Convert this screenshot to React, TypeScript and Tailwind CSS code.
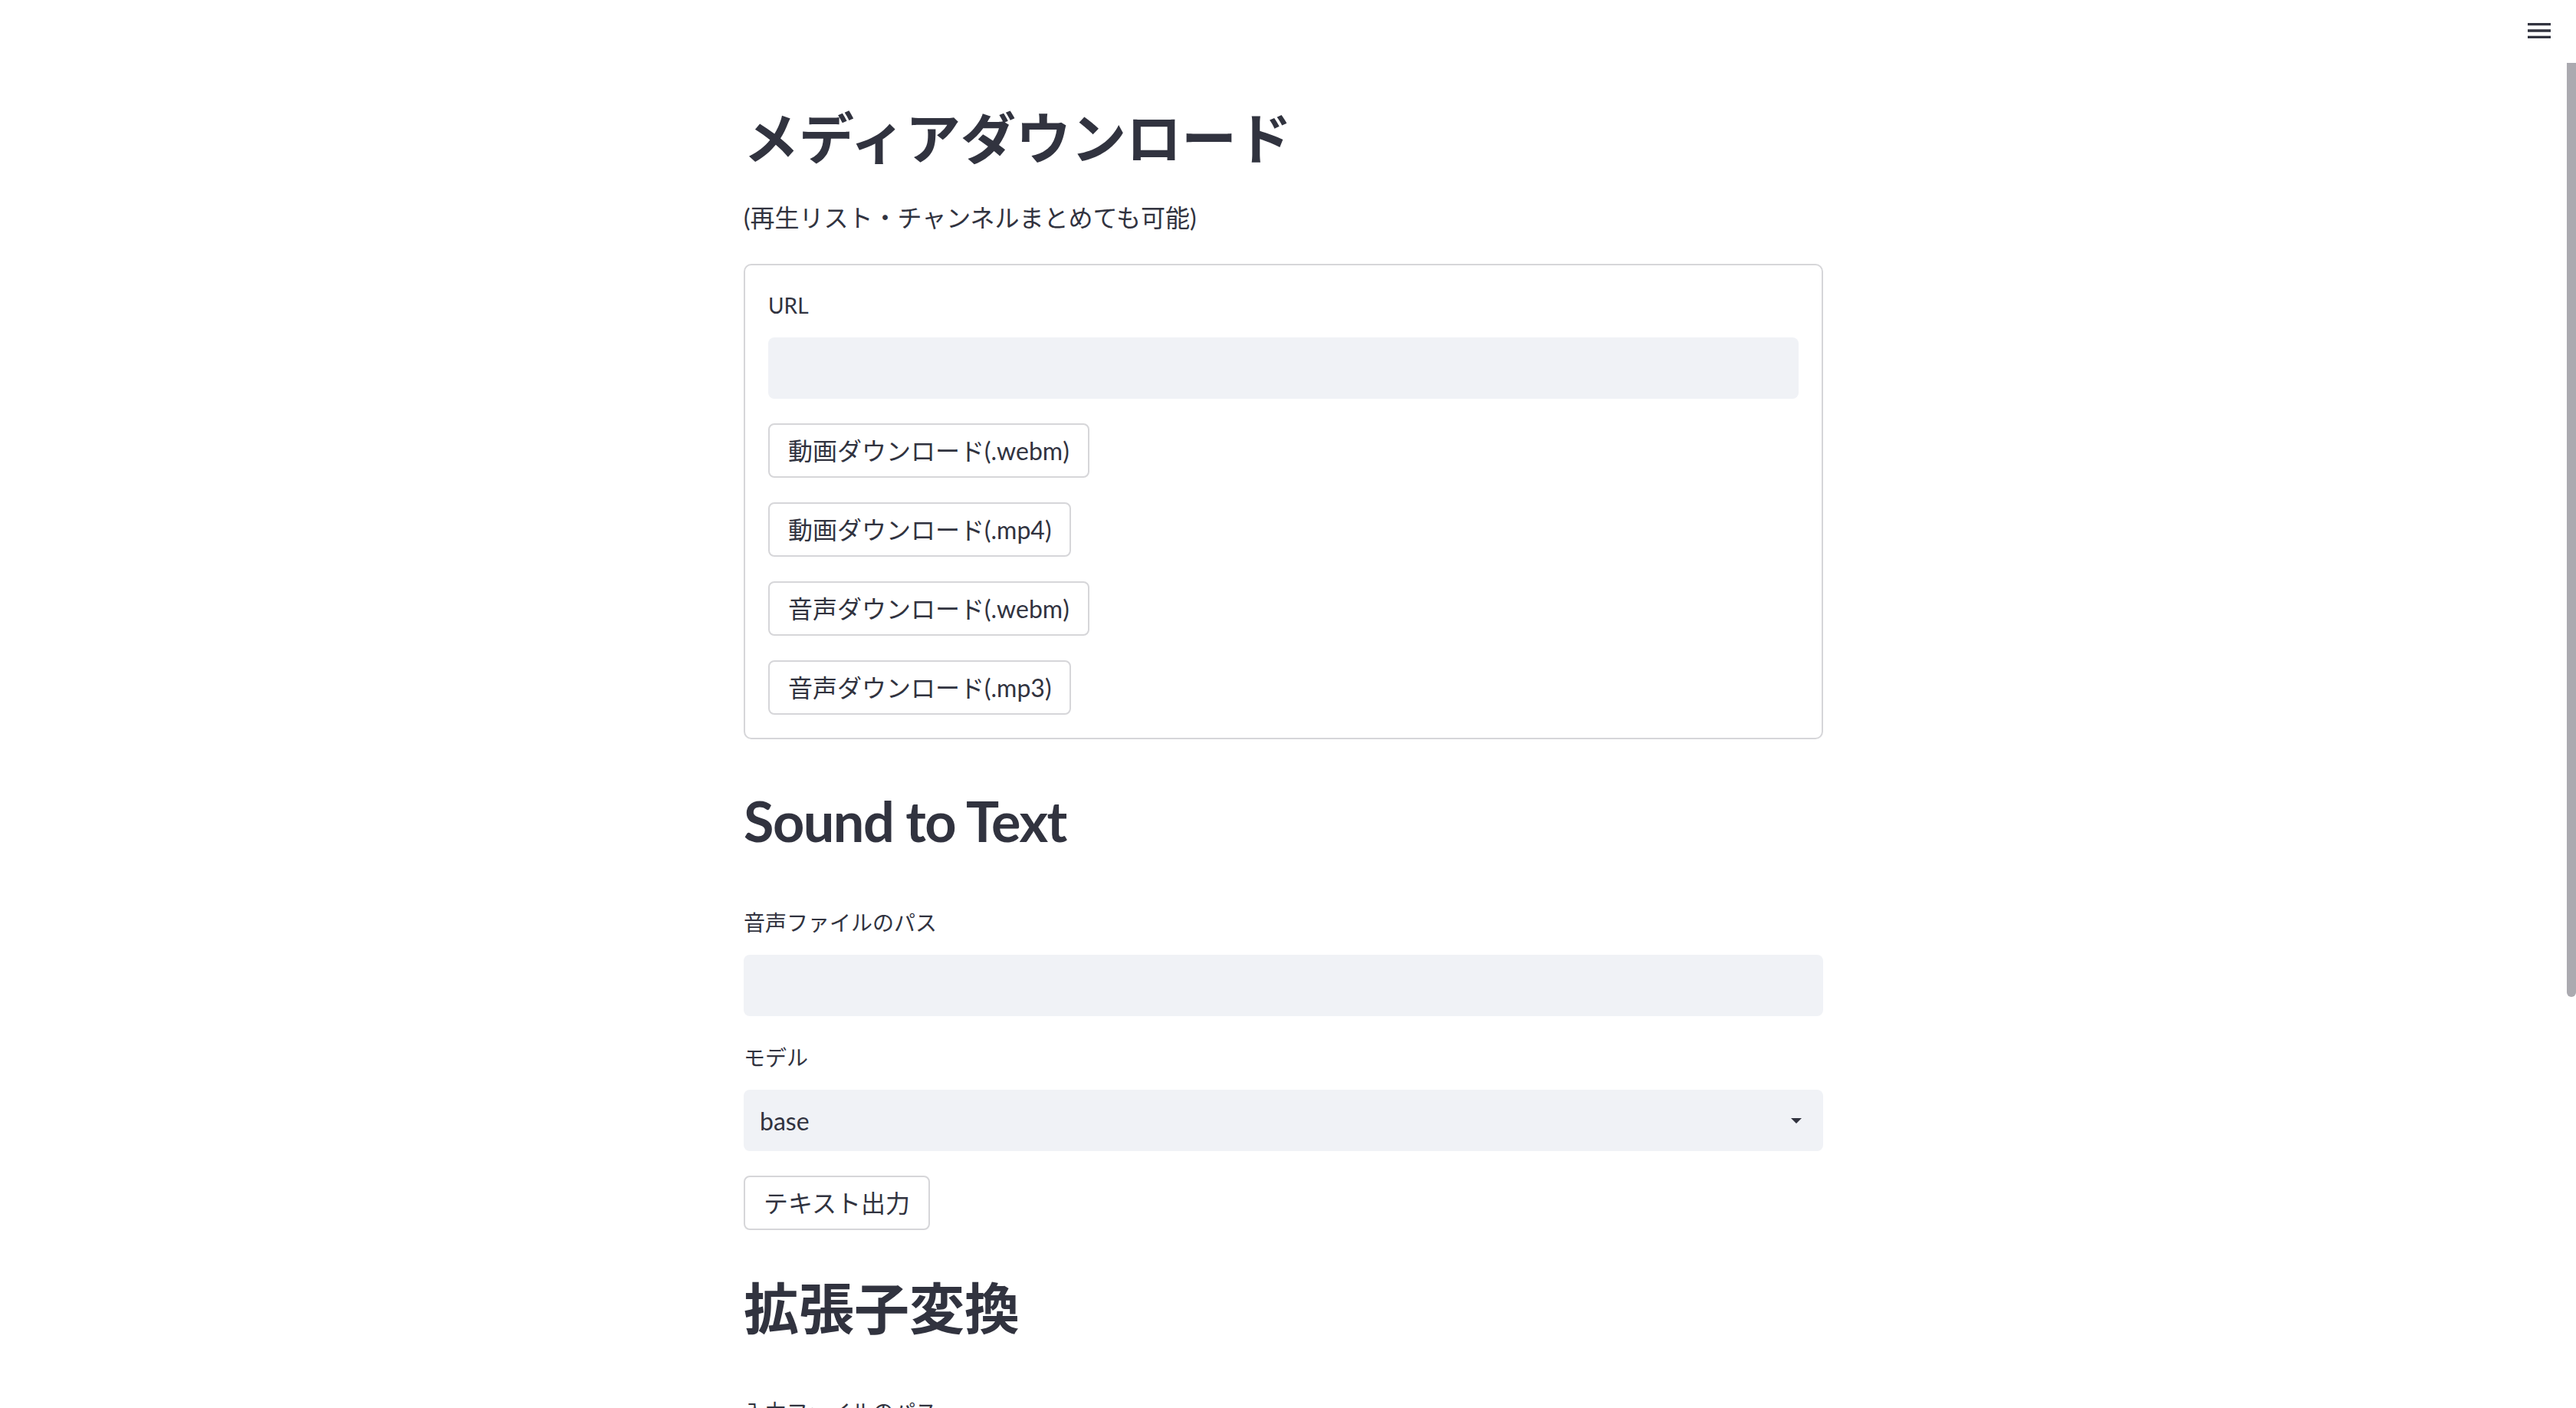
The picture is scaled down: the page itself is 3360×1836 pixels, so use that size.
import React from "react";

const downloadButtons = [
  "動画ダウンロード(.webm)",
  "動画ダウンロード(.mp4)",
  "音声ダウンロード(.webm)",
  "音声ダウンロード(.mp3)",
];

function Field({ label }: { label: string }) {
  return (
    <div>
      <label className="mb-[19px] block text-[28px] leading-[45px]">{label}</label>
      <input
        type="text"
        className="block h-[80px] w-full rounded-[8px] border-0 bg-[#f0f2f6] px-[20px] text-[32px] outline-none"
      />
    </div>
  );
}

function Button({ children }: { children: React.ReactNode }) {
  return (
    <button className="h-[71px] rounded-[8px] border-2 border-[#d6d6d9] bg-white px-[24px] text-[32px] leading-[51px] text-[#31333f] hover:border-[#ff4b4b] hover:text-[#ff4b4b]">
      {children}
    </button>
  );
}

export default function App() {
  return (
    <div className="relative h-screen overflow-hidden bg-white pr-[12px] font-['Lato','Noto_Sans_CJK_JP',sans-serif] text-[#31333f]">
      {/* header menu */}
      <button className="absolute right-[28px] top-[20px] h-[40px] w-[40px] text-[#31333f]">
        <svg viewBox="0 0 24 24" width="40" height="40" fill="currentColor">
          <path d="M3 18h18v-2H3v2zm0-5h18v-2H3v2zm0-7v2h18V6H3z" />
        </svg>
      </button>

      {/* scrollbar thumb */}
      <div className="absolute right-0 top-[82px] h-[1218px] w-[12px] rounded-b-[6px] bg-[#abaab0]" />

      <main className="mx-auto w-[1408px] pt-[136px]">
        <h2 className="text-[72px] font-bold leading-[86px]">メディアダウンロード</h2>
        <p className="mt-[36px] text-[32px] leading-[51px]">(再生リスト・チャンネルまとめても可能)</p>

        <div className="mt-[35px] rounded-[10px] border-2 border-[#d6d6d9] p-[30px]">
          <Field label="URL" />
          <div className="mt-[32px] flex flex-col items-start gap-[32px]">
            {downloadButtons.map((b) => (
              <Button key={b}>{b}</Button>
            ))}
          </div>
        </div>

        <h2 className="mt-[63px] text-[72px] font-bold leading-[86px] tracking-[-1.5px]">Sound to Text</h2>
        <div className="mt-[68px]">
          <Field label="音声ファイルのパス" />
        </div>
        <div className="mt-[32px]">
          <label className="mb-[19px] block text-[28px] leading-[45px]">モデル</label>
          <div className="flex h-[80px] w-full items-center justify-between rounded-[8px] bg-[#f0f2f6] pl-[21px] pr-[28px]">
            <span className="text-[32px] leading-[51px]">base</span>
            <svg width="14" height="7" viewBox="0 0 14 7">
              <path d="M0 0h14L7 7z" fill="#31333f" />
            </svg>
          </div>
        </div>
        <div className="mt-[32px]">
          <Button>テキスト出力</Button>
        </div>

        <h2 className="mt-[58px] text-[72px] font-bold leading-[86px]">拡張子変換</h2>
        <div className="mt-[71px]">
          <Field label="入力ファイルのパス" />
        </div>
      </main>
    </div>
  );
}
